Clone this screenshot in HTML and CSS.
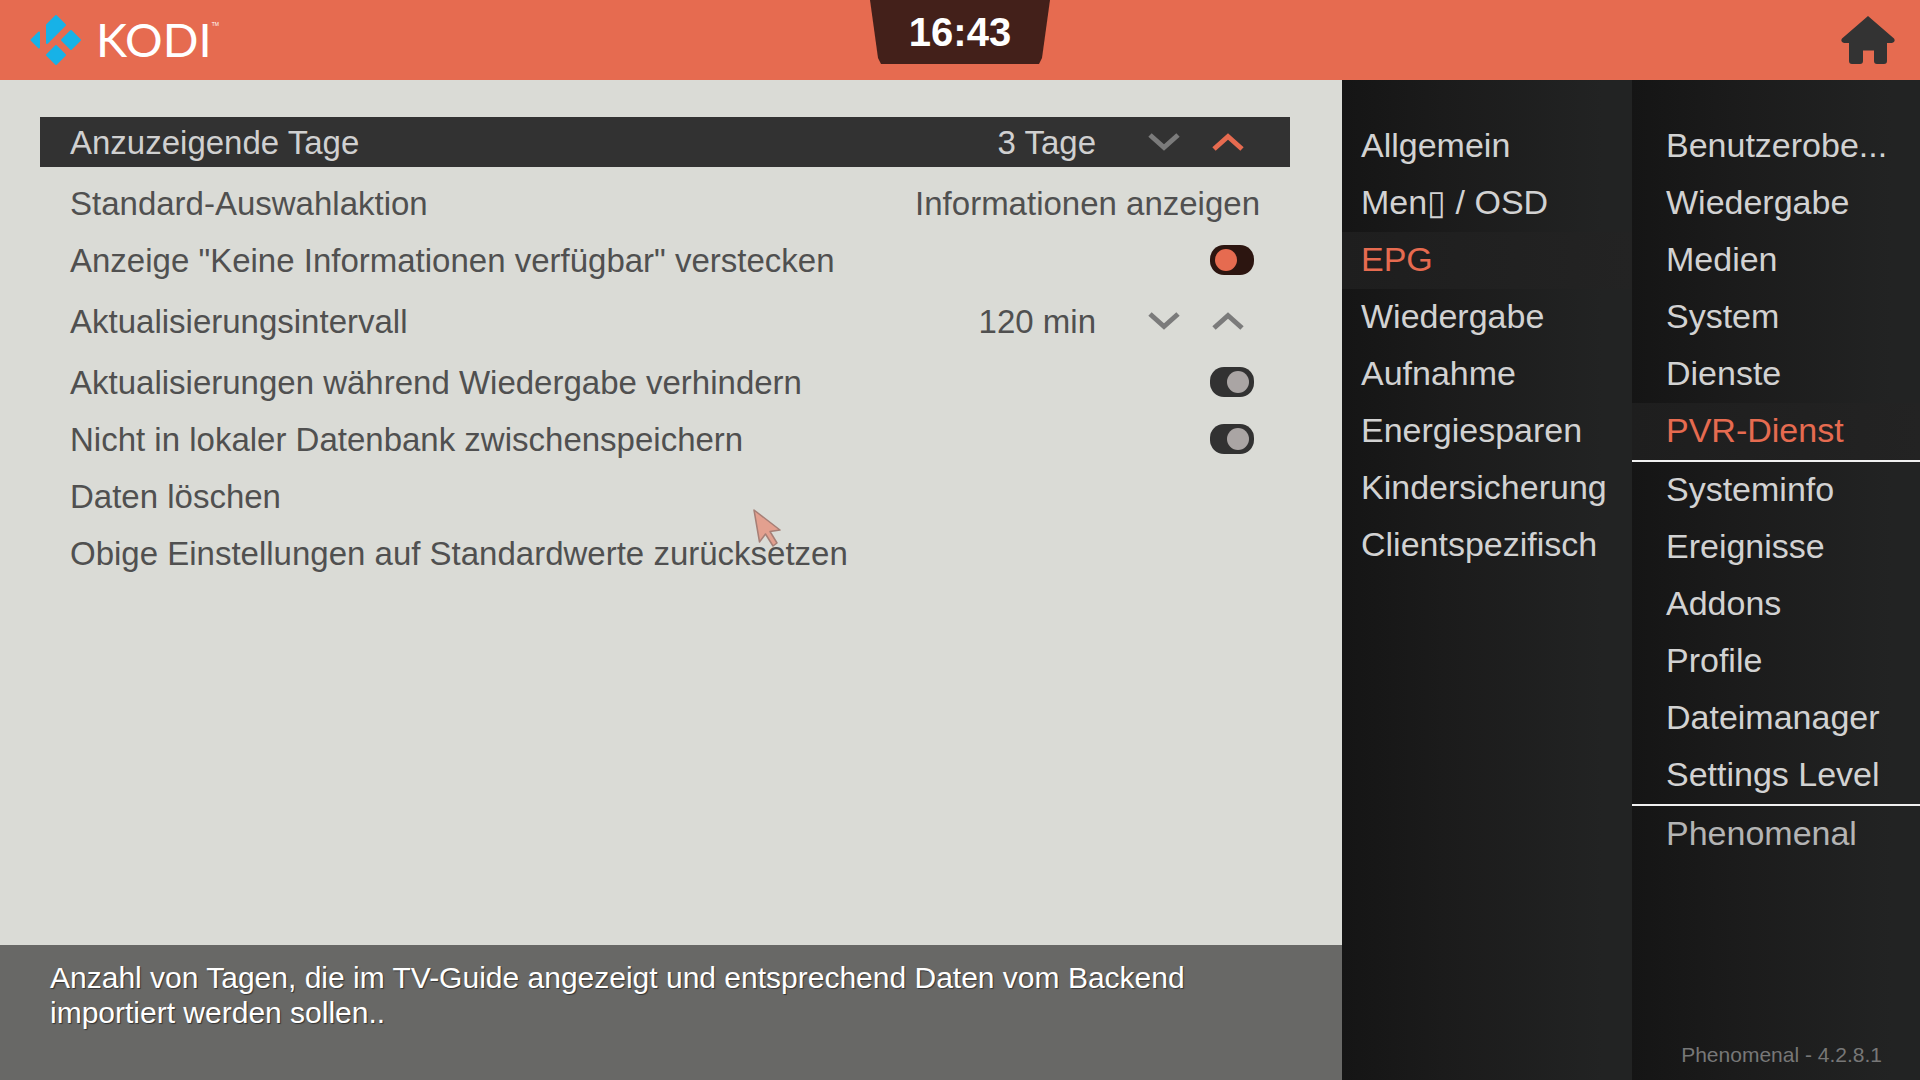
FILE: index.html
```html
<!DOCTYPE html>
<html lang="de">
<head>
    <meta charset="UTF-8">
    <meta name="viewport" content="width=device-width, initial-scale=1.0">
    <title>Kodi - PVR-Dienst</title>
    <link rel="stylesheet" href="styles.css">
</head>
<body>
    <header class="topbar">
        <div class="logo">
            <svg class="logo-mark" viewBox="0 0 52 52" fill="#17b2e7" stroke="#17b2e7" stroke-width="2" stroke-linejoin="round">
                <path d="M26 2L35 11L17 29V11Z"/>
                <path d="M1.500 26L9 18.500V33.500Z"/>
                <path d="M41 17L50 26L41 35L32 26Z"/>
                <path d="M26 32L35 41L26 50L17 41Z"/>
            </svg>
            <span class="logo-text">KODI</span><span class="logo-tm">TM</span>
        </div>
        <div class="clock">16:43</div>
        <a class="home" href="#" aria-label="Home">
            <svg viewBox="0 0 54 48" fill="#333"><path d="M27 0L53 22.500Q55 26 51 27H46V45Q46 48 43 48H36Q33 48 33 45V34.500H22V45Q22 48 19 48H11Q8 48 8 45V27H3Q-1 26 1 22.500Z"/></svg>
        </a>
    </header>

    <div class="layout">
        <main class="content">
            <form class="settings">
                <div class="row row-spin focused">
                    <span class="label">Anzuzeigende Tage</span>
                    <output class="value">3 Tage</output>
                    <button type="button" class="arrow" aria-label="Weniger Tage"><svg viewBox="0 0 32 18"><path d="M2 2L16 14.500L30 2"/></svg></button>
                    <button type="button" class="arrow active" aria-label="Mehr Tage"><svg viewBox="0 0 32 18"><path d="M2 16L16 3.500L30 16"/></svg></button>
                </div>
                <button type="button" class="row">
                    <span class="label">Standard-Auswahlaktion</span>
                    <span class="option">Informationen anzeigen</span>
                </button>
                <div class="row">
                    <label class="label" for="hide-noinfo">Anzeige "Keine Informationen verfügbar" verstecken</label>
                    <input type="checkbox" class="toggle" id="hide-noinfo" checked>
                </div>
                <div class="row row-spin">
                    <span class="label">Aktualisierungsintervall</span>
                    <output class="value">120 min</output>
                    <button type="button" class="arrow" aria-label="Kürzer"><svg viewBox="0 0 32 18"><path d="M2 2L16 14.500L30 2"/></svg></button>
                    <button type="button" class="arrow" aria-label="Länger"><svg viewBox="0 0 32 18"><path d="M2 16L16 3.500L30 16"/></svg></button>
                </div>
                <div class="row">
                    <label class="label" for="no-update">Aktualisierungen während Wiedergabe verhindern</label>
                    <input type="checkbox" class="toggle" id="no-update">
                </div>
                <div class="row">
                    <label class="label" for="no-cache">Nicht in lokaler Datenbank zwischenspeichern</label>
                    <input type="checkbox" class="toggle" id="no-cache">
                </div>
                <button type="button" class="row"><span class="label">Daten löschen</span></button>
                <button type="button" class="row"><span class="label">Obige Einstellungen auf Standardwerte zurücksetzen</span></button>
            </form>
            <p class="description">Anzahl von Tagen, die im TV-Guide angezeigt und entsprechend Daten vom Backend importiert werden sollen..</p>
        </main>

        <nav class="menu submenu">
            <a href="#">Allgemein</a>
            <a href="#">Men▯ / OSD</a>
            <a href="#" class="current">EPG</a>
            <a href="#">Wiedergabe</a>
            <a href="#">Aufnahme</a>
            <a href="#">Energiesparen</a>
            <a href="#">Kindersicherung</a>
            <a href="#">Clientspezifisch</a>
        </nav>

        <nav class="menu mainmenu">
            <a href="#">Benutzerobe...</a>
            <a href="#">Wiedergabe</a>
            <a href="#">Medien</a>
            <a href="#">System</a>
            <a href="#">Dienste</a>
            <a href="#" class="current">PVR-Dienst</a>
            <hr>
            <a href="#">Systeminfo</a>
            <a href="#">Ereignisse</a>
            <a href="#">Addons</a>
            <a href="#">Profile</a>
            <a href="#">Dateimanager</a>
            <a href="#">Settings Level</a>
            <hr>
            <a href="#" class="dim">Phenomenal</a>
            <p class="version">Phenomenal - 4.2.8.1</p>
        </nav>
    </div>

    <svg class="pointer" viewBox="0 0 28 38"><path d="M1 1L27 21L17 22.500L24 34L20 37L12.500 25L6.500 33Z"/></svg>
</body>
</html>
```

FILE: styles.css
```css
:root {
    --accent: #e66b50;
    --light: #dadbd6;
    --dark: #323232;
    --text: #505050;
    --menu-text: #d2d2d2;
}
* { box-sizing: border-box; }
body {
    margin: 0; min-height: 100vh; display: flex; flex-direction: column;
    font-family: "Liberation Sans", Arial, sans-serif; color: var(--text); background: var(--light);
}
a { color: inherit; text-decoration: none; }
button { border: none; padding: 0; background: none; font: inherit; color: inherit; cursor: pointer; }

/* top bar */
.topbar { height: 80px; background: var(--accent); display: grid; grid-template-columns: 1fr auto 1fr; align-items: start; }
.logo { display: flex; align-items: center; height: 80px; padding-left: 30px; color: white; }
.logo-mark { width: 52px; height: 52px; margin-right: 14px; }
.logo-text { font-family: Lato, sans-serif; font-size: 47px; line-height: 48px; padding-bottom: 2px; }
.logo-tm { font-size: 5px; line-height: 36px; align-self: flex-start; margin-top: 6px; }
.clock {
    width: 180px; height: 64px; background: #43201a; color: white; text-align: center;
    font-weight: bold; font-size: 40px; line-height: 64px;
    clip-path: polygon(0 0, 100% 0, 172px 58px, 169px 100%, 11px 100%, 8px 58px);
}
.home { justify-self: end; margin: 16px 25px 0 0; }
.home svg { display: block; width: 54px; height: 48px; }

/* columns */
.layout { flex: 1; display: flex; }
.content { flex: 1; display: flex; flex-direction: column; }

/* settings list */
.settings { flex: 1; display: flex; flex-direction: column; gap: 7px; padding: 33px 52px 0 40px; font-size: 33px; }
.row { display: flex; align-items: center; width: 100%; height: 50px; padding: 0 30px; text-align: left; }
.row-spin { margin: 4px 0; padding-right: 46px; }
.row.focused { background: var(--dark); color: #d0d0d0; }
.label, .value, .option { padding-top: 2px; }
.label { flex: 1; }
.value { margin-right: 20px; }
.arrow { width: 32px; height: 32px; margin-left: 32px; display: flex; align-items: center; }
.arrow svg { width: 32px; height: 18px; fill: none; stroke: #7b7b7b; stroke-width: 5; }
.arrow.active svg { stroke: var(--accent); }
.toggle {
    appearance: none; width: 44px; height: 30px; margin: 0 6px 0 0; border-radius: 14px; background: var(--dark);
    display: flex; align-items: center; justify-content: flex-end; padding: 0 5px;
}
.toggle::before { content: ""; width: 22px; height: 22px; border-radius: 50%; background: #aaa5a4; }
.toggle:checked { background: #2c1510; justify-content: flex-start; }
.toggle:checked::before { background: var(--accent); }

.description {
    margin: 0; min-height: 135px; padding: 15px 50px; background: #686866; color: white;
    font-size: 30px; line-height: 35px; text-shadow: 1px 1px 1px #333;
}

/* side menus */
.menu {
    display: flex; flex-direction: column; padding-top: 38px; font-size: 34px; color: var(--menu-text);
    background: linear-gradient(to right, #151515, #1b1b1b 35%, #222323 90%);
}
.menu a { height: 57px; line-height: 54px; white-space: nowrap; }
.menu a.current { color: var(--accent); background: linear-gradient(to right, #1e1e1e, #232323); }
.menu a.dim { color: #b4b4b4; }
.menu hr { width: 100%; height: 2px; margin: 0; border: none; background: #f0f0f0; }
.submenu { width: 290px; }
.submenu a { padding-left: 19px; }
.mainmenu { width: 288px; }
.mainmenu a { padding-left: 34px; }
.version { margin: auto 38px 12px 0; text-align: right; font-size: 21px; line-height: 26px; color: #777; }

/* mouse pointer lies over the page */
.pointer { position: absolute; left: 753px; top: 509px; width: 28px; height: 38px; fill: #e3a08f; stroke: #a67f76; stroke-width: 1.5; stroke-linejoin: round; }
```
